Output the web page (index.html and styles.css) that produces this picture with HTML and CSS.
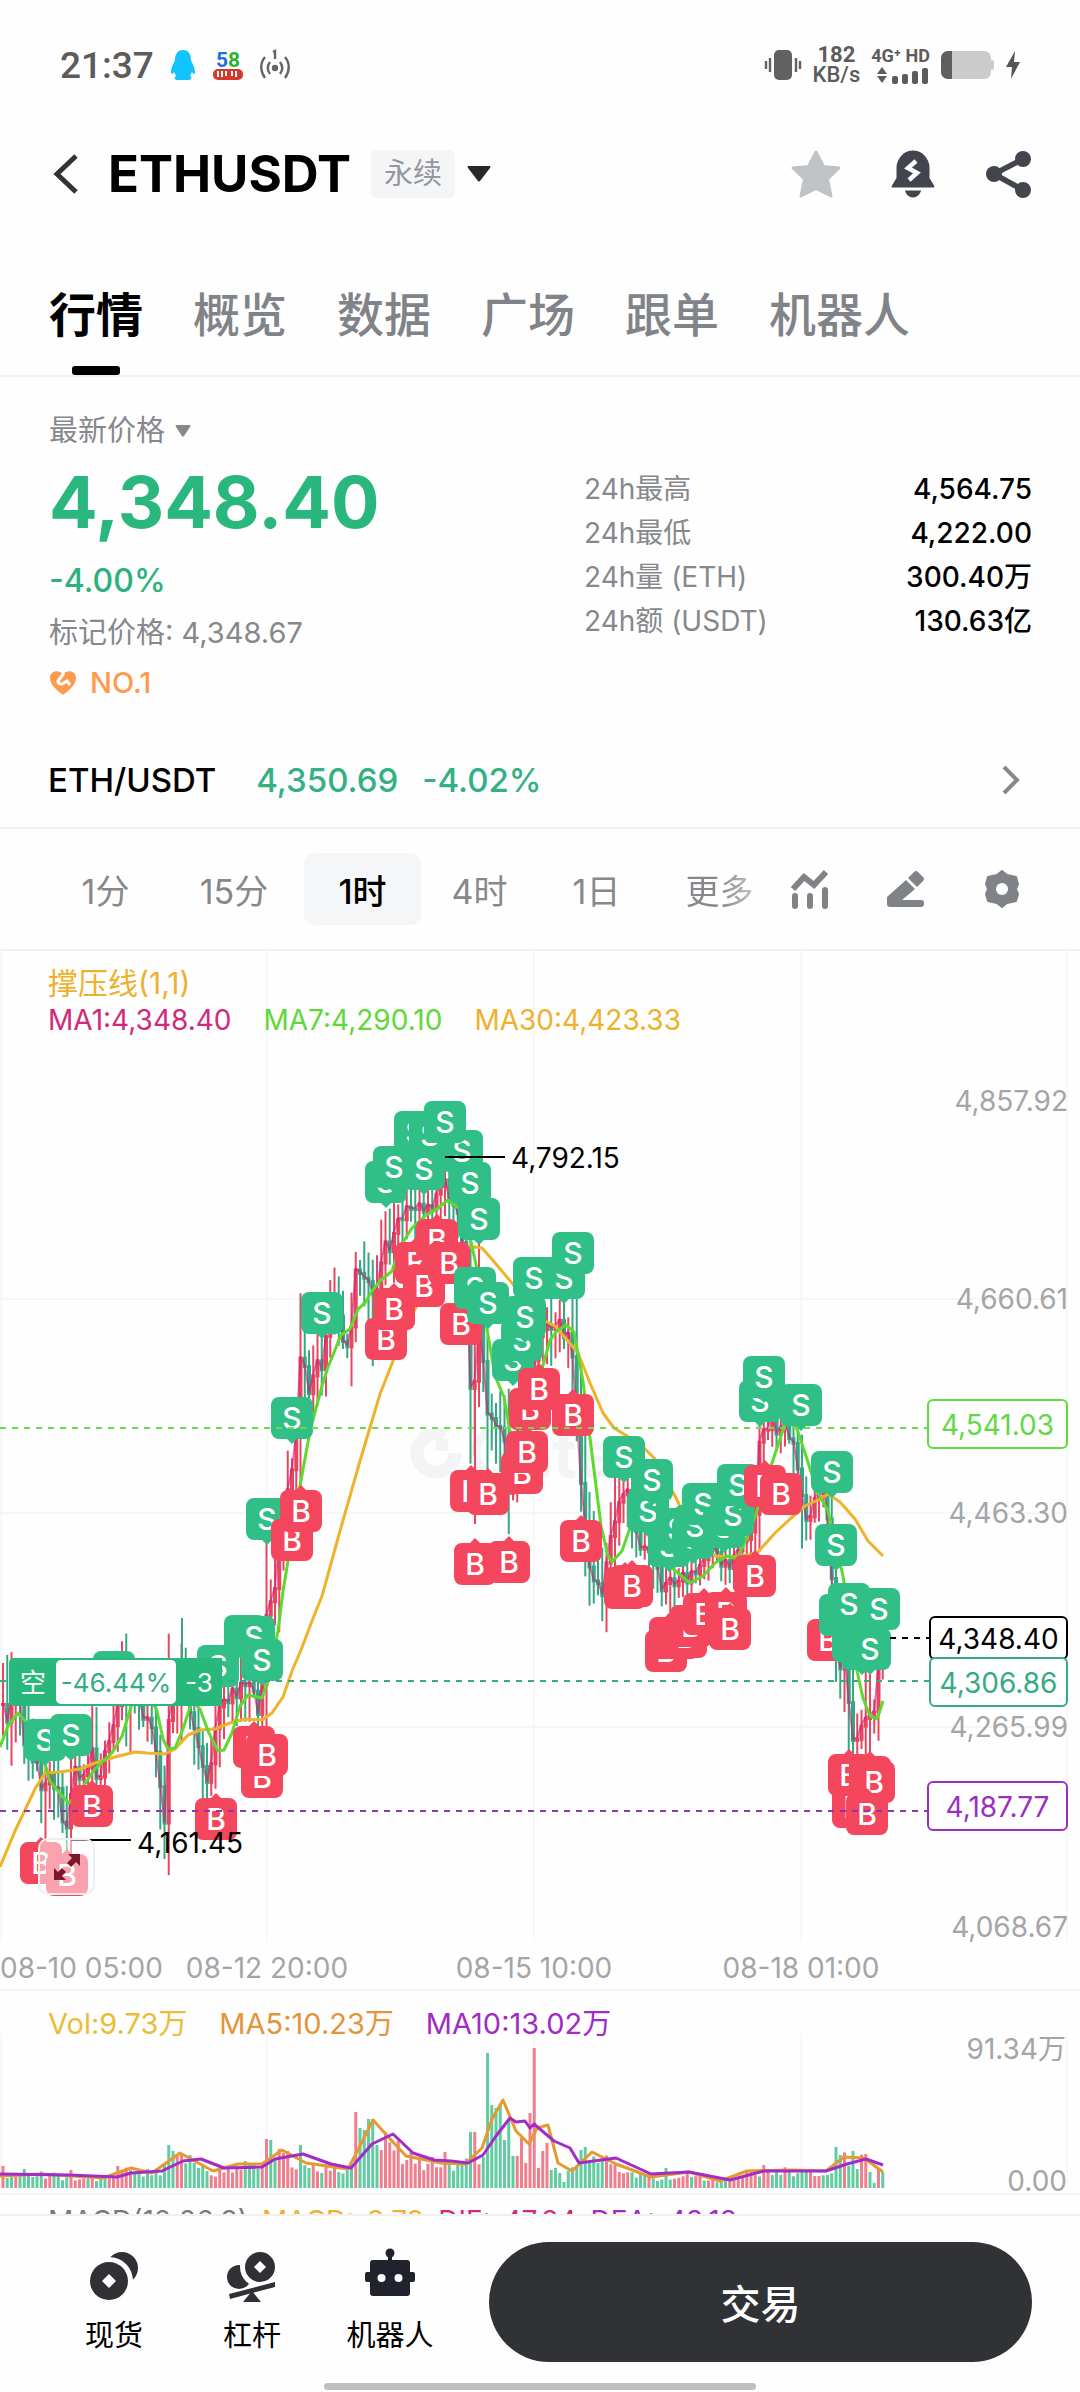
FILE: index.html
```html
<!DOCTYPE html>
<html lang="zh-CN">
<head>
  <meta charset="UTF-8" />
  <meta name="viewport" content="width=device-width, initial-scale=1.0"/>
  <title>ETHUSDT 永续</title>
  <link rel="stylesheet" href="styles.css">
</head>
<body>
  <div class="status-bar">
    <div class="status-left">
      <span class="clock">21:37</span>
      <svg width="28" height="32" viewBox="0 0 28 32"><path d="M14 1c-6 0-8 5-8 10-1 3-4 7-4 12 0 3 2 2 3 0l2 4c-3 2-1 4 2 4h10c3 0 5-2 2-4l2-4c1 2 3 3 3 0 0-5-3-9-4-12 0-5-2-10-8-10z" fill="#12c4fb"/></svg>
      <svg width="32" height="32" viewBox="0 0 32 32">
        <rect x="1" y="20" width="30" height="11" rx="5" fill="#d8382c"/>
        <path d="M6 22v6M10 22v6M14 22v5M20 22v5M24 22v6" stroke="#fff" stroke-width="2"/>
        <text x="4" y="18" class="logo-58" fill="#1d6fe0">5</text><text x="16" y="18" class="logo-58" fill="#2fae35">8</text>
      </svg>
      <svg width="32" height="32" viewBox="0 0 32 32" fill="none" stroke="#666" stroke-width="2.4">
        <path d="M6 8c-5 6-5 14 0 21M11 13c-3 4-3 8 0 12M26 8c5 6 5 14 0 21M21 13c3 4 3 8 0 12M14 3l2-1v8"/>
        <circle cx="16" cy="19" r="2" fill="#666"/>
      </svg>
    </div>
    <div class="status-right">
      <svg width="38" height="32" viewBox="0 0 38 32">
        <rect x="10" y="1" width="18" height="30" rx="5" fill="#616161"/>
        <path d="M6 9v14M2 12v8M32 9v14M36 12v8" stroke="#616161" stroke-width="2.4"/>
      </svg>
      <div class="speed"><b>182</b><span>KB/s</span></div>
      <div class="network">
        <b>4G⁺ HD</b>
        <svg width="54" height="18" viewBox="0 0 54 18" fill="#5c5c5c">
          <path d="M3 8l5-7 5 7zM3 10h10l-5 7z"/>
          <rect x="18" y="10" width="6" height="8" rx="2"/><rect x="28" y="8" width="6" height="10" rx="2"/><rect x="38" y="5" width="6" height="13" rx="2"/><rect x="48" y="2" width="6" height="16" rx="2"/>
        </svg>
      </div>
      <svg width="54" height="28" viewBox="0 0 54 28">
        <rect x="0" y="0" width="50" height="28" rx="7" fill="#cbcbcb"/>
        <rect x="49" y="9" width="4" height="10" rx="2" fill="#cbcbcb"/>
        <path d="M7 0h4v28H7a7 7 0 0 1-7-7V7a7 7 0 0 1 7-7z" fill="#5f5f5f"/>
      </svg>
      <svg width="14" height="28" viewBox="0 0 14 28"><path d="M9 0L0 16h6L5 28l9-17H8z" fill="#555"/></svg>
    </div>
  </div>

  <header class="main-header">
    <button class="icon-btn back" aria-label="返回">
      <svg width="36" height="48" viewBox="0 0 36 48" fill="none" stroke="#333" stroke-width="5"><path d="M28 6L9 24l19 18"/></svg>
    </button>
    <h1>ETHUSDT</h1>
    <span class="badge">永续</span>
    <button class="icon-btn" aria-label="切换合约">
      <svg width="24" height="16" viewBox="0 0 24 16"><path d="M1 0h22q1 0 0 2L13 15q-1 1-2 0L1 2q-1-2 0-2z" fill="#26272a"/></svg>
    </button>
    <div class="header-icons">
      <button class="icon-btn" aria-label="收藏">
        <svg width="52" height="48" viewBox="0 0 52 48"><path d="M26 2l7.500 14.500L49 18 37.500 29 41 46 26 38.500 11 46l3.500-17L3 18l15.500-1.500z" fill="#bfc3c6" stroke="#bfc3c6" stroke-width="3" stroke-linejoin="round"/></svg>
      </button>
      <button class="icon-btn" aria-label="提醒">
        <svg width="48" height="48" viewBox="0 0 48 48"><path d="M7.500 28V18a16.500 17.500 0 0 1 33 0v10l4.500 7.500q1 2-1 2H4q-2 0-1-2z" fill="#42454d"/><path d="M16 40.500h16c-1 4-4 7-8 7s-7-3-8-7z" fill="#42454d"/><path d="M27 11l-8 7 9 5-8 7" fill="none" stroke="#fff" stroke-width="4.500"/></svg>
      </button>
      <button class="icon-btn" aria-label="分享">
        <svg width="48" height="48" viewBox="0 0 48 48"><path d="M39 9L10 24l29 16" fill="none" stroke="#42454d" stroke-width="5.500"/><circle cx="39" cy="9" r="8" fill="#42454d"/><circle cx="10" cy="24" r="8" fill="#42454d"/><circle cx="39" cy="40" r="8" fill="#42454d"/></svg>
      </button>
    </div>
  </header>

  <nav class="tabs">
    <a href="#" class="active">行情</a>
    <a href="#">概览</a>
    <a href="#">数据</a>
    <a href="#">广场</a>
    <a href="#">跟单</a>
    <a href="#">机器人</a>
  </nav>

  <section class="ticker">
    <div class="ticker-left">
      <button class="price-type">最新价格
        <svg width="16" height="12" viewBox="0 0 16 12"><path d="M1 0h14q1 0 0 2L9 11q-1 1-2 0L1 2q-1-2 0-2z" fill="#86888c"/></svg>
      </button>
      <div class="last-price">4,348.40</div>
      <div class="change">-4.00%</div>
      <div class="mark-price">标记价格: <span>4,348.67</span></div>
      <div class="rank">
        <svg width="28" height="26" viewBox="0 0 28 26"><path d="M14 25C6 19 1 14 1 8c0-7 8-9 13-4 5-5 13-3 13 4 0 6-5 11-13 17z" fill="#ff9a4d"/><path d="M15 3l-6 8q0 3 4 3l5-3 3 4" fill="none" stroke="#fff" stroke-width="3"/></svg>
        NO.1
      </div>
    </div>
    <table class="stats">
      <tr><th>24h最高</th><td>4,564.75</td></tr>
      <tr><th>24h最低</th><td>4,222.00</td></tr>
      <tr><th>24h量 (ETH)</th><td>300.40万</td></tr>
      <tr><th>24h额 (USDT)</th><td>130.63亿</td></tr>
    </table>
  </section>

  <a href="#" class="spot-row">
    <span class="pair">ETH/USDT</span>
    <span>4,350.69</span>
    <span>-4.02%</span>
    <svg width="20" height="32" viewBox="0 0 20 32" fill="none" stroke="#86888c" stroke-width="4"><path d="M3 3l13 13L3 29"/></svg>
  </a>

  <div class="intervals">
    <div class="interval-list">
      <button>1分</button>
      <button>15分</button>
      <button class="active">1时</button>
      <button>4时</button>
      <button>1日</button>
      <button class="more">更多</button>
    </div>
    <div class="tools">
      <button class="icon-btn" aria-label="指标">
        <svg width="40" height="40" viewBox="0 0 40 40" fill="none" stroke="#7f8287" stroke-width="6"><path d="M3 20l11-12 10 8L36 3"/><path d="M5 27v10M20 27v10M35 21v16" stroke-linecap="round"/></svg>
      </button>
      <button class="icon-btn" aria-label="画线">
        <svg width="40" height="40" viewBox="0 0 40 40" fill="#7f8287"><path d="M4 38q-3 0-3-3v-7L20 11l9 9-13 11h19q3 0 3 3v1q0 3-3 3zM22 9l6-6q2-2 4 0l5 5q2 2 0 4l-6 6z"/></svg>
      </button>
      <button class="icon-btn" aria-label="设置">
        <svg width="40" height="40" viewBox="0 0 40 40"><path d="M20 2l5 4 9 2 2 7-2 5 2 5-2 7-9 2-5 4-5-4-9-2-2-7 2-5-2-5 2-7 9-2z" fill="#7f8287" stroke="#7f8287" stroke-width="2" stroke-linejoin="round"/><circle cx="20" cy="20" r="6" fill="#fff"/></svg>
      </button>
    </div>
  </div>

  <section class="chart">
    <div class="legend">
      <div class="legend-title yellow">撑压线(1,1)</div>
      <div class="legend-row">
        <span class="pink">MA1:4,348.40</span>
        <span class="green">MA7:4,290.10</span>
        <span class="yellow">MA30:4,423.33</span>
      </div>
    </div>
    <svg id="priceChart" class="pane" viewBox="0 950 1080 1040"></svg>
    <button class="expand" aria-label="全屏">
      <svg width="30" height="30" viewBox="0 0 30 30" fill="#78182c"><path d="M16 2h12v12l-4-4-5 5-4-4 5-5zM2 16l4 4 4-4 4 4-4 4 4 4H2z"/></svg>
    </button>
  </section>

  <section class="volume">
    <div class="legend-row legend">
      <span class="gold">Vol:9.73万</span>
      <span class="orange">MA5:10.23万</span>
      <span class="purple">MA10:13.02万</span>
    </div>
    <svg id="volumeChart" class="pane" viewBox="0 1990 1080 204"></svg>
  </section>

  <section class="macd">
    <span>MACD(12,26,9)</span>
    <span class="yellow">MACD:-3.79</span>
    <span class="pink">DIF:-47.34</span>
    <span class="purple">DEA:-43.13</span>
  </section>

  <footer class="bottom-bar">
    <div class="actions">
      <a href="#">
        <svg width="54" height="54" viewBox="0 0 54 54" fill="#2f3134"><circle cx="35" cy="20" r="16"/><circle cx="22" cy="33" r="24" fill="#fefefe"/><circle cx="22" cy="33" r="19"/><path d="M22 26l7 7-7 7-7-7z" fill="#fff"/></svg>
        现货
      </a>
      <a href="#">
        <svg width="54" height="54" viewBox="0 0 54 54" fill="#2f3134"><circle cx="14" cy="29" r="12"/><circle cx="35" cy="19" r="20" fill="#fefefe"/><circle cx="35" cy="19" r="15"/><path d="M35 13l6 6-6 6-6-6z" fill="#fff"/><path d="M4 46l46-12v5L5 51z"/><path d="M27 43l9 11H18z"/></svg>
        杠杆
      </a>
      <a href="#">
        <svg width="54" height="54" viewBox="0 0 54 54" fill="#20222d"><circle cx="27" cy="5" r="4.500"/><path d="M25 8h4v6h-4z"/><rect x="7" y="12" width="40" height="36" rx="3"/><rect x="2" y="24" width="50" height="10" rx="2"/><circle cx="18.500" cy="30" r="4" fill="#fff"/><circle cx="35.500" cy="30" r="4" fill="#fff"/></svg>
        机器人
      </a>
    </div>
    <button class="trade">交易</button>
  </footer>
  <div class="home-indicator"></div>

  <script src="chart.js"></script>
</body>
</html>
```

FILE: styles.css
```css
* {
  box-sizing: border-box;
}

body {
  margin: 0;
  background-color: #fefefe;
  color: #000;
  font-family: Inter, "Noto Sans CJK SC", sans-serif;
  font-size: 28px;
}

a {
  color: inherit;
  text-decoration: none;
}

button {
  padding: 0;
  border: none;
  background: none;
  color: inherit;
  font: inherit;
  cursor: pointer;
}

svg {
  display: block;
  flex-shrink: 0;
}

.icon-btn {
  display: flex;
}

/* status bar */
.status-bar {
  display: flex;
  justify-content: space-between;
  align-items: center;
  height: 130px;
  padding: 0 60px;
  color: #5c5c5c;
  font-family: Roboto, sans-serif;
}

.status-left,
.status-right {
  display: flex;
  align-items: center;
  gap: 15px;
}

.status-right {
  gap: 11px;
}

.clock {
  font-size: 37px;
  font-weight: 500;
}

.logo-58 {
  font-size: 21px;
  font-weight: bold;
}

.speed,
.network {
  display: flex;
  flex-direction: column;
  align-items: center;
  font-size: 22px;
  font-weight: 500;
  line-height: 20px;
}

.network {
  gap: 1px;
  font-size: 18px;
  line-height: 18px;
}

/* header */
.main-header {
  display: flex;
  align-items: center;
  height: 88px;
  padding: 0 48px;
}

h1 {
  margin: 0 20px 0 24px;
  font-size: 51px;
  font-weight: 700;
  line-height: 64px;
}

.badge {
  margin-right: 12px;
  padding: 4px 13px;
  border-radius: 6px;
  background-color: #f4f5f7;
  color: #94979c;
  font-size: 29px;
  line-height: 40px;
}

.header-icons {
  display: flex;
  gap: 47px;
  margin-left: auto;
}

/* tabs */
.tabs {
  display: flex;
  gap: 50px;
  height: 159px;
  padding: 0 49px;
  border-bottom: 2px solid #f2f2f3;
  color: #808388;
  font-size: 47px;
  font-weight: 500;
}

.tabs a {
  display: flex;
  flex-direction: column;
  justify-content: flex-end;
  align-items: center;
  gap: 17px;
  line-height: 68px;
  white-space: nowrap;
}

.tabs a::after {
  content: "";
  width: 48px;
  height: 9px;
  border-radius: 3px;
}

.tabs .active {
  color: #000;
  font-weight: 700;
}

.tabs .active::after {
  background-color: #000;
}

/* price block */
.ticker {
  display: flex;
  justify-content: space-between;
  padding: 32px 48px 0 49px;
  color: #86888c;
}

.price-type {
  display: flex;
  align-items: center;
  gap: 10px;
  font-size: 29px;
  line-height: 44px;
}

.last-price {
  color: #2ab77e;
  font-size: 72px;
  font-weight: 700;
  line-height: 98px;
}

.change {
  margin-top: 8px;
  color: #2eb07f;
  font-size: 32px;
  font-weight: 500;
  line-height: 44px;
}

.mark-price {
  margin-top: 8px;
  font-size: 29px;
  line-height: 44px;
}

.rank {
  display: flex;
  align-items: center;
  gap: 13px;
  margin-top: 6px;
  color: #ff9a4d;
  font-size: 29px;
  font-weight: 500;
  line-height: 44px;
}

.stats {
  width: 448px;
  margin-top: 58px;
  border-collapse: collapse;
  align-self: flex-start;
}

.stats th,
.stats td {
  height: 44px;
  padding: 0;
  font-weight: 400;
  line-height: 44px;
  text-align: left;
}

.stats td {
  color: #000;
  font-weight: 500;
  text-align: right;
}

.spot-row {
  display: flex;
  align-items: center;
  gap: 24px;
  height: 96px;
  margin-top: 28px;
  padding: 0 59px 0 48px;
  border-bottom: 2px solid #f2f2f3;
  color: #34b084;
  font-size: 33px;
  font-weight: 500;
}

.spot-row .pair {
  margin-right: 16px;
  color: #000;
}

.spot-row svg {
  margin-left: auto;
}

/* intervals */
.intervals {
  display: flex;
  justify-content: space-between;
  align-items: center;
  height: 122px;
  padding: 0 58px 0 47px;
  border-bottom: 2px solid #f2f2f3;
}

.interval-list {
  display: flex;
  color: #86888c;
  font-size: 34px;
}

.interval-list button {
  min-width: 117px;
  height: 72px;
  border-radius: 10px;
}

.interval-list button:nth-child(2) {
  min-width: 140px;
}

.interval-list .active {
  background-color: #f4f6f8;
  color: #000;
  font-weight: 500;
}

.interval-list .more {
  padding-left: 12px;
  background: linear-gradient(to right, #86888c 55%, #e2e3e4);
  background-clip: text;
  color: transparent;
}

.tools {
  display: flex;
  gap: 56px;
}

/* charts */
.chart,
.volume {
  position: relative;
  border-bottom: 2px solid #f3f3f4;
}

.chart .pane,
.volume .pane {
  width: 100%;
  height: auto;
  margin-bottom: -2px;
}

.legend {
  position: absolute;
  top: 14px;
  left: 48px;
  font-size: 28px;
  line-height: 37px;
}

.legend-title {
  font-size: 30px;
}

.legend-row {
  display: flex;
  gap: 32px;
}

.volume .legend {
  font-size: 29px;
}

.yellow { color: #eeb12c; }
.gold { color: #e8bd38; }
.orange { color: #e3953a; }
.pink { color: #d02a7c; }
.green { color: #5fd838; }
.purple { color: #a02cc4; }

.pane text {
  fill: #a3a5a8;
  font-size: 28px;
}

.pane .tag { fill: inherit; }
.pane .note { fill: #000; }
.pane .white { fill: #fff; }
.pane .small { font-size: 26px; }

.pane .mark {
  fill: #fff;
  font-size: 30px;
  font-weight: 500;
  text-anchor: middle;
}

.pane .watermark {
  fill: #f3f4f5;
  font-size: 64px;
  font-weight: 700;
}

.expand {
  position: absolute;
  top: 887px;
  left: 38px;
  display: flex;
  justify-content: center;
  align-items: center;
  width: 57px;
  height: 57px;
  border: 2px solid #eeeeee;
  border-radius: 10px;
  background-color: rgba(255, 255, 255, 0.5);
}

.macd {
  display: flex;
  gap: 14px;
  height: 19px;
  padding: 9px 48px 0;
  overflow: hidden;
  color: #77797d;
  font-size: 28px;
}

/* bottom bar */
.bottom-bar {
  display: flex;
  justify-content: space-between;
  align-items: center;
  padding: 26px 48px 21px 45px;
  border-top: 2px solid #f0f0f1;
}

.actions {
  display: flex;
}

.actions a {
  display: flex;
  flex-direction: column;
  align-items: center;
  gap: 14px;
  width: 138px;
  font-size: 29px;
  line-height: 40px;
}

.trade {
  width: 55%;
  height: 120px;
  border-radius: 60px;
  background-color: #313235;
  color: #fff;
  font-size: 40px;
  font-weight: 500;
}

.home-indicator {
  width: 40%;
  height: 7px;
  margin: 0 auto 3px;
  border-radius: 4px;
  background-color: #c0c0c0;
}
```

FILE: chart.js
```js
const GREEN = "#2fbf87";
const RED = "#f4465c";
const STEP = 4.25;

// close line: x, y, wick length
const closes = [
  [0,1715,60],[5,1710,90],[8,1735,50],[12,1690,90],[18,1690,50],[24,1735,80],[30,1755,50],[38,1765,50],[42,1800,50],[46,1790,70],[50,1770,40],[55,1778,40],
  [60,1805,40],[67,1820,40],[70,1785,70],[75,1770,40],[85,1765,50],[92,1745,60],[98,1775,40],[105,1758,40],[110,1745,40],[116,1712,40],[122,1690,60],
  [130,1685,70],[138,1690,40],[143,1715,30],[152,1730,40],[157,1745,50],[161,1800,60],[165,1815,50],[169,1715,110],[175,1700,40],[180,1680,60],[187,1690,40],
  [194,1730,60],[200,1750,40],[204,1770,60],[210,1777,20],[214,1745,60],[218,1715,50],[226,1695,40],[234,1690,50],[243,1680,50],[250,1675,50],[258,1705,30],
  [264,1680,70],[267,1600,120],[271,1600,60],[276,1580,60],[280,1540,50],[287,1485,50],[292,1470,30],[297,1420,80],[301,1350,100],[305,1375,40],[309,1385,20],
  [313,1380,40],[318,1365,40],[322,1370,50],[326,1340,50],[330,1310,40],[334,1290,40],[338,1300,50],[343,1335,30],[350,1338,30],[355,1260,90],[359,1270,40],
  [366,1275,60],[373,1300,90],[377,1290,40],[385,1240,60],[390,1240,50],[396,1225,50],[403,1225,40],[410,1205,50],[420,1200,50],[430,1200,50],[438,1190,40],
  [446,1185,50],[455,1210,50],[460,1225,50],[466,1270,60],[470,1380,180],[475,1370,180],[479,1330,110],[483,1350,60],[488,1415,120],[494,1420,50],[500,1430,70],
  [506,1432,40],[509,1490,60],[513,1495,40],[520,1410,60],[530,1370,50],[540,1330,60],[547,1315,70],[552,1320,40],[558,1325,40],[566,1332,30],[571,1335,50],
  [575,1400,90],[581,1480,110],[585,1530,90],[590,1570,50],[596,1575,70],[602,1590,40],[607,1565,60],[613,1520,60],[619,1510,60],[624,1498,50],[628,1495,40],
  [634,1535,40],[642,1545,30],[650,1545,40],[657,1560,40],[662,1580,40],[668,1588,40],[676,1580,40],[685,1572,40],[694,1575,30],[702,1562,30],[710,1552,30],
  [720,1558,40],[728,1562,50],[736,1550,40],[748,1530,50],[755,1510,50],[758,1440,60],[764,1430,30],[770,1420,30],[777,1425,30],[782,1430,30],[788,1422,30],
  [793,1440,40],[798,1465,60],[802,1500,70],[806,1512,40],[812,1510,20],[819,1490,50],[825,1493,30],[829,1525,50],[833,1600,60],[838,1660,50],[845,1660,50],
  [849,1700,60],[853,1738,70],[858,1738,30],[862,1728,30],[866,1705,70],[870,1715,50],[874,1720,30],[878,1660,60],[883,1640,30]
];

const ma7 = [
  [0,1746],[8,1725],[18,1712],[27,1722],[40,1745],[50,1780],[62,1795],[69,1802],[80,1790],[95,1768],[112,1752],[122,1735],[131,1706],[137,1690],[150,1695],
  [157,1710],[163,1738],[168,1748],[175,1747],[183,1728],[192,1700],[200,1708],[208,1730],[218,1750],[224,1749],[232,1732],[240,1705],[248,1694],[262,1697],
  [268,1680],[278,1630],[283,1590],[288,1560],[300,1485],[310,1430],[322,1385],[328,1366],[333,1354],[341,1334],[350,1328],[358,1308],[365,1302],[372,1290],
  [380,1280],[392,1270],[400,1246],[412,1227],[425,1215],[437,1208],[448,1199],[460,1208],[470,1236],[480,1282],[488,1334],[495,1375],[504,1396],[510,1430],
  [516,1442],[525,1421],[540,1375],[550,1339],[557,1330],[566,1324],[574,1331],[583,1380],[592,1453],[601,1525],[608,1555],[612,1561],[622,1550],[630,1527],
  [640,1510],[650,1520],[664,1553],[672,1567],[690,1582],[703,1575],[715,1562],[727,1555],[737,1558],[750,1530],[760,1500],[771,1465],[781,1435],[788,1415],
  [797,1428],[806,1455],[817,1490],[828,1510],[835,1540],[843,1575],[850,1620],[857,1670],[863,1697],[870,1715],[877,1718],[883,1700]
];

const ma30 = [
  [0,1866],[15,1830],[35,1788],[45,1772],[60,1771],[80,1768],[95,1762],[115,1756],[135,1751],[147,1752],[165,1753],[175,1748],[188,1734],[200,1729],[215,1728],
  [230,1722],[245,1718],[262,1719],[272,1712],[283,1696],[292,1670],[301,1649],[312,1620],[322,1595],[340,1530],[360,1460],[380,1393],[395,1355],[415,1308],
  [440,1269],[460,1248],[475,1246],[482,1247],[490,1256],[512,1282],[530,1308],[545,1320],[555,1325],[568,1340],[578,1352],[590,1382],[603,1412],[614,1427],
  [627,1435],[640,1443],[655,1458],[675,1495],[695,1535],[715,1555],[735,1556],[757,1552],[775,1532],[790,1518],[805,1505],[820,1498],[828,1493],[840,1501],
  [855,1518],[868,1540],[878,1550],[883,1555]
];

// buy / sell marks, later ones lie on top
const marks = [
  ["S",114,1671],["S",45,1739],["S",71,1734],["B",41,1862],["B",67,1874],["B",92,1805],["B",216,1818],["S",218,1665],["S",245,1635],["S",254,1636],["S",262,1659],
  ["B",254,1746],["B",262,1776],["B",267,1754],["S",267,1518],["B",292,1539],["B",301,1510],["S",292,1417],["S",322,1312],
  ["B",386,1338],["B",394,1308],["B",416,1262],["B",437,1239],["B",424,1285],["B",449,1262],["B",461,1323],
  ["S",386,1181],["S",394,1166],["S",415,1131],["S",424,1168],["S",430,1134],["S",462,1150],["S",445,1121],["S",470,1182],["S",479,1218],
  ["S",475,1287],["S",488,1302],["S",513,1359],["S",522,1339],["S",525,1316],["S",564,1277],["S",534,1277],["S",573,1252],
  ["B",471,1490],["B",488,1493],["B",475,1563],["B",509,1561],["B",522,1472],["B",530,1408],["B",539,1388],["B",527,1451],["B",573,1414],["B",581,1540],
  ["S",624,1456],["S",648,1510],["S",652,1479],["S",669,1545],["S",677,1528],["S",693,1537],["S",695,1525],["S",703,1503],["S",724,1526],["S",733,1514],["S",738,1484],
  ["B",625,1587],["B",632,1585],["B",666,1650],["B",670,1637],["B",678,1637],["B",686,1636],["B",691,1625],["B",704,1613],["B",726,1612],["B",730,1628],["B",755,1575],
  ["S",760,1400],["S",764,1376],["S",801,1404],["B",765,1485],["B",781,1493],["S",832,1471],["S",836,1544],
  ["B",828,1639],["S",840,1614],["S",853,1640],["S",862,1648],["S",879,1608],["S",849,1603],["S",870,1648],
  ["B",849,1774],["B",853,1806],["B",870,1776],["B",874,1781],["B",867,1813]
];

const volMa5 = [
  [0,2175],[41,2173],[103,2177],[131,2167],[152,2172],[180,2152],[213,2170],[238,2163],[262,2163],[282,2149],[306,2162],[348,2168],[360,2145],[373,2119],[392,2140],
  [406,2155],[441,2162],[465,2163],[482,2147],[492,2118],[503,2099],[516,2130],[529,2143],[537,2127],[548,2124],[558,2162],[572,2170],[592,2151],[616,2163],
  [651,2176],[689,2171],[720,2180],[747,2170],[790,2169],[826,2170],[844,2156],[864,2157],[883,2171]
];

const volMa10 = [
  [0,2173],[69,2174],[117,2176],[131,2172],[162,2170],[183,2160],[201,2158],[224,2167],[262,2166],[275,2158],[303,2153],[331,2163],[351,2167],[372,2143],[393,2133],
  [413,2152],[434,2159],[451,2160],[468,2162],[483,2154],[496,2135],[510,2117],[516,2121],[525,2120],[530,2127],[534,2123],[554,2140],[570,2147],[579,2162],
  [616,2157],[651,2173],[689,2171],[730,2179],[764,2170],[826,2170],[847,2163],[866,2158],[883,2164]
];

// tallest volume bars: x, height
const spikes = [
  [2,22],[24,19],[70,18],[119,22],[169,43],[173,37],[181,33],[218,23],[267,49],[271,48],[300,43],[355,76],[360,60],[364,58],[368,69],[372,69],[376,43],[380,38],
  [410,36],[445,36],[470,56],[475,56],[487,135],[492,83],[496,80],[500,84],[505,48],[509,68],[513,32],[517,32],[521,50],[526,25],[530,75],[534,140],[538,20],
  [542,37],[547,45],[551,18],[555,20],[559,15],[563,6],[580,38],[585,41],[665,20],[763,23],[835,41],[839,33],[853,37],[866,34],[870,16],[874,5],[878,19],[882,16]
];

let seed = 11;
function rand() {
  seed = (seed * 16807) % 2147483647;
  return seed / 2147483647;
}

function valueAt(points, x, k) {
  for (let i = 1; i < points.length; i++) {
    if (x <= points[i][0]) {
      const a = points[i - 1];
      const b = points[i];
      return a[k] + (b[k] - a[k]) * (x - a[0]) / (b[0] - a[0]);
    }
  }
  return points[points.length - 1][k];
}

function line(x1, y1, x2, y2, color, width, extra = "") {
  return `<path d="M${x1} ${y1}L${x2} ${y2}" stroke="${color}" stroke-width="${width}" ${extra}/>`;
}

function polyline(points, color, width) {
  return `<polyline points="${points.map((p) => p[0] + "," + p[1]).join(" ")}" fill="none" stroke="${color}" stroke-width="${width}" stroke-linejoin="round"/>`;
}

function drawPrice() {
  let out = "";
  [1, 267, 534, 801, 1067].forEach((x) => { out += line(x, 950, x, 1940, "#f8f8f9", 2); });
  [1298, 1512, 1726].forEach((y) => { out += line(0, y, 1067, y, "#f6f6f7", 2); });

  out += `<circle cx="436" cy="1452" r="19" fill="none" stroke="#f3f4f5" stroke-width="13" stroke-dasharray="98 22"/>
    <rect x="436" y="1438" width="12" height="12" fill="#f3f4f5"/>
    <text x="468" y="1476" class="watermark">Gate</text>`;

  // candles
  const path = [];
  for (let x = 3; x < 884; x += STEP) {
    const y = valueAt(closes, x, 1) + (rand() - 0.5) * 20;
    const wick = valueAt(closes, x, 2);
    const prev = path.length ? path[path.length - 1][1] : y;
    const color = y <= prev ? "#e8465f" : "#35a880";
    const top = Math.min(y, prev) - wick * (0.2 + rand() * 0.7);
    const bottom = Math.max(y, prev) + wick * (0.2 + rand() * 0.7);
    out += line(x, top, x, bottom, color, 2);
    out += line(x, Math.min(y, prev), x, Math.max(y, prev) + 3, color, 4);
    path.push([x, y]);
  }
  out += line(182, 1617, 182, 1690, "#35a880", 2);
  out += line(475, 1380, 475, 1523, "#e8465f", 2);
  out += `<g opacity="0.6">${polyline(path, "#d5177c", 2)}</g>`;
  out += polyline(ma30, "#efb32a", 3) + polyline(ma7, "#5fd92f", 3);

  marks.forEach(([type, x, y]) => {
    const color = type === "S" ? GREEN : RED;
    const tip = type === "S" ? `M${x - 6} ${y + 20}h12l-6 6z` : `M${x - 6} ${y - 20}h12l-6 -6z`;
    out += `<rect x="${x - 21}" y="${y - 21}" width="42" height="42" rx="8" fill="${color}"/><path d="${tip}" fill="${color}"/>
      <text x="${x}" y="${y + 11}" class="mark">${type}</text>`;
  });

  out += line(0, 1427, 928, 1427, "#6bdc4c", 2, 'stroke-dasharray="6 6"');
  out += line(0, 1680, 930, 1680, "#3aa882", 2, 'stroke-dasharray="6 6"');
  out += line(0, 1810, 928, 1810, "#8a3aa6", 2, 'stroke-dasharray="6 6"');
  out += line(890, 1637, 930, 1637, "#000", 2, 'stroke-dasharray="6 6"');

  // position banner
  out += `<path d="M14 1657H222V1705H14q-5 0-5-5v-38q0-5 5-5z" fill="#28b87c"/>
    <rect x="56" y="1659" width="120" height="44" rx="5" fill="#fff"/>
    <text x="20" y="1691" class="white small">空</text>
    <g fill="#35ad82"><text x="116" y="1691" class="tag small" text-anchor="middle">-46.44%</text></g>
    <text x="185" y="1691" class="white small">-3</text>`;

  // highest and lowest price
  out += line(445, 1156, 505, 1156, "#000", 2) + '<text x="511" y="1167" class="note">4,792.15</text>';
  out += line(71, 1839, 131, 1839, "#000", 2) + '<text x="137" y="1852" class="note">4,161.45</text>';

  [[1110, "4,857.92"], [1308, "4,660.61"], [1522, "4,463.30"], [1736, "4,265.99"], [1936, "4,068.67"]].forEach(([y, t]) => {
    out += `<text x="1068" y="${y}" text-anchor="end">${t}</text>`;
  });

  [[928, 1399, 48, "#62d845", "4,541.03"], [930, 1616, 42, "#000", "4,348.40"], [930, 1657, 48, "#35ab84", "4,306.86"], [928, 1781, 48, "#9a30c0", "4,187.77"]].forEach(([x, y, h, c, t]) => {
    out += `<rect x="${x}" y="${y}" width="${1067 - x}" height="${h}" rx="5" fill="#fff" stroke="${c}" stroke-width="2"/>
      <g fill="${c}"><text x="${(x + 1067) / 2}" y="${y + h / 2 + 11}" text-anchor="middle" class="tag">${t}</text></g>`;
  });

  [[0, "start", "08-10 05:00"], [267, "middle", "08-12 20:00"], [534, "middle", "08-15 10:00"], [801, "middle", "08-18 01:00"]].forEach(([x, a, t]) => {
    out += `<text x="${x}" y="1977" text-anchor="${a}">${t}</text>`;
  });
  document.getElementById("priceChart").innerHTML = out;
}

function drawVolume() {
  let out = "";
  [1, 267, 534, 801, 1067].forEach((x) => { out += line(x, 2032, x, 2187, "#f8f8f9", 2); });
  for (let x = 3; x < 884; x += STEP) {
    const spike = spikes.find((s) => Math.abs(s[0] - x) <= STEP / 2);
    const h = spike ? spike[1] : (2187 - valueAt(volMa5, x, 1)) * (0.6 + rand() * 0.6);
    let color = valueAt(closes, x, 1) <= valueAt(closes, x - STEP, 1) ? "#f07f8d" : "#62cba2";
    if (rand() < 0.15) color = "#62cba2";
    if (Math.abs(x - 534) < 3) color = "#f07f8d";
    if (Math.abs(x - 487) < 3) color = "#62cba2";
    out += line(x, 2187 - h, x, 2187, color, 3);
  }
  out += polyline(volMa5, "#e59a2f", 3) + polyline(volMa10, "#a32cc9", 3);
  out += '<text x="1066" y="2058" text-anchor="end">91.34万</text><text x="1067" y="2190" text-anchor="end">0.00</text>';
  document.getElementById("volumeChart").innerHTML = out;
}

drawPrice();
drawVolume();
```
